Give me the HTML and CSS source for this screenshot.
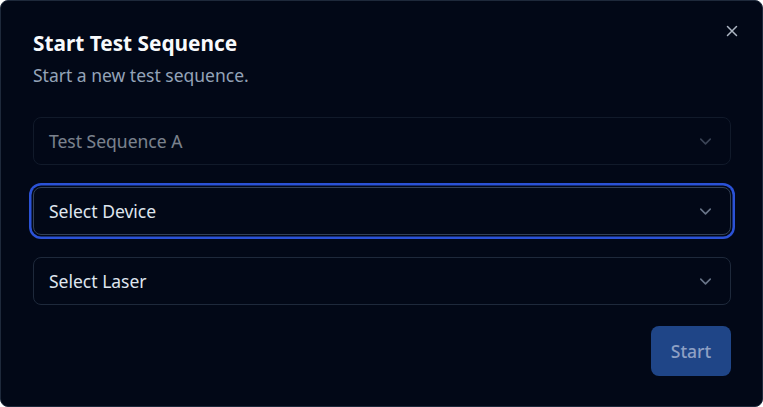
FILE: index.html
```html
<!DOCTYPE html>
<html>
<head>
<meta charset="utf-8">
<link rel="stylesheet" href="styles.css">
</head>
<body>
<div class="dialog">
  <button class="close" aria-label="Close">
    <svg width="18" height="18" viewBox="0 0 24 24" fill="none" stroke="currentColor" stroke-width="2" stroke-linecap="round"><path d="M18 6 6 18M6 6l12 12"/></svg>
  </button>
  <div class="header">
    <h2 class="title">Start Test Sequence</h2>
    <p class="desc">Start a new test sequence.</p>
  </div>
  <div class="fields">
    <div class="select disabled"><span>Test Sequence A</span><svg class="chev" viewBox="0 0 24 24" fill="none" stroke="currentColor" stroke-width="2" stroke-linecap="round" stroke-linejoin="round"><path d="m6 9 6 6 6-6"/></svg></div>
    <div class="select focused"><span>Select Device</span><svg class="chev" viewBox="0 0 24 24" fill="none" stroke="currentColor" stroke-width="2" stroke-linecap="round" stroke-linejoin="round"><path d="m6 9 6 6 6-6"/></svg></div>
    <div class="select"><span>Select Laser</span><svg class="chev" viewBox="0 0 24 24" fill="none" stroke="currentColor" stroke-width="2" stroke-linecap="round" stroke-linejoin="round"><path d="m6 9 6 6 6-6"/></svg></div>
  </div>
  <div class="footer">
    <button class="start">Start</button>
  </div>
</div>
</body>
</html>
```
FILE: styles.css
```css
* { box-sizing: border-box; }
html, body { margin: 0; padding: 0; }
body {
  background: #ffffff;
  width: 763px;
  height: 407px;
  font-family: "Noto Sans", sans-serif;
}
.dialog {
  position: relative;
  width: 763px;
  height: 407px;
  background: #020817;
  border: 1px solid #1e293b;
  border-radius: 8px;
  padding: 28px 31px 0 32px;
  display: flex;
  flex-direction: column;
  color: #f8fafc;
}
.close {
  position: absolute;
  top: 21px;
  right: 21px;
  background: none;
  border: 0;
  padding: 0;
  color: #cbd5e1;
  width: 18px;
  height: 18px;
  display: flex;
  opacity: 0.85;
}
.header { display: flex; flex-direction: column; gap: 6px; }
.title {
  margin: 0;
  font-size: 20.8px;
  line-height: 28px;
  font-weight: 700;
  color: #f8fafc;
}
.desc {
  margin: 0;
  font-size: 17.5px;
  line-height: 24px;
  color: #94a3b8;
}
.fields {
  margin-top: 30px;
  display: flex;
  flex-direction: column;
  gap: 22px;
}
.select {
  height: 48px;
  border: 1px solid #1e293b;
  border-radius: 8px;
  background: #020817;
  padding: 0 15px 0 15px;
  display: flex;
  align-items: center;
  justify-content: space-between;
  font-size: 17.5px;
  color: #dfe5ee;
}
.select.disabled { opacity: 0.55; }
.select.focused {
  border-color: #334155;
  box-shadow: 0 0 0 1.5px #020817, 0 0 0 4px #2b52d6;
}
.chev { color: #94a3b8; opacity: 0.7; width: 19px; height: 19px; }
.footer {
  margin-top: 21px;
  display: flex;
  justify-content: flex-end;
}
.start {
  width: 80px;
  height: 50px;
  border: 0;
  border-radius: 8px;
  background: #1f4587;
  color: #8ea0c4;
  font-family: inherit;
  font-size: 17.5px;
  font-weight: 500;
}
```
